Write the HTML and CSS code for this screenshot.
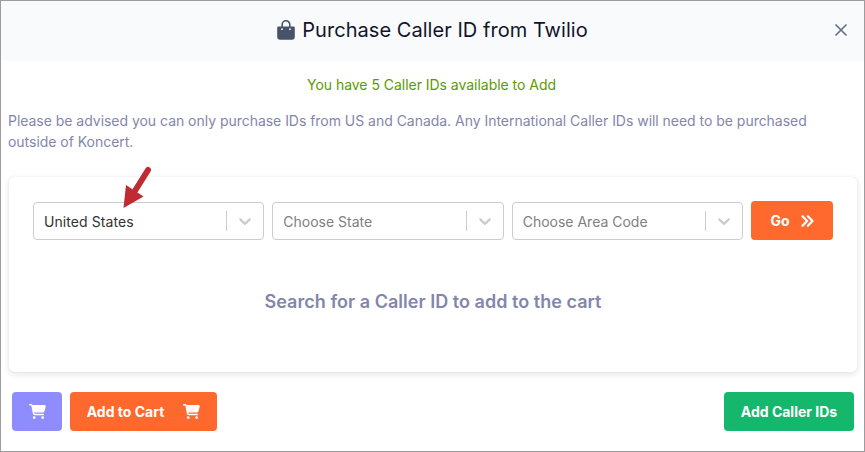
FILE: index.html
```html
<!DOCTYPE html>
<html lang="en">
<head>
<meta charset="utf-8">
<title>Purchase Caller ID</title>
<link rel="stylesheet" href="styles.css">
</head>
<body>
<svg class="defs" aria-hidden="true">
  <symbol id="cart" viewBox="0 0 576 512"><path d="M0 24C0 10.700 10.700 0 24 0H69.500c22 0 41.500 12.800 50.600 32h411c26.300 0 45.500 25 38.600 50.400l-41 152.300c-8.500 31.400-37 53.300-69.500 53.300H170.700l5.400 28.500c2.200 11.300 12.100 19.500 23.600 19.500H488c13.300 0 24 10.700 24 24s-10.700 24-24 24H199.700c-34.600 0-64.300-24.600-70.700-58.500L77.400 54.500c-.7-3.800-4-6.500-7.900-6.500H24C10.700 48 0 37.300 0 24zM128 464a48 48 0 1 1 96 0 48 48 0 1 1-96 0zm336-48a48 48 0 1 1 0 96 48 48 0 1 1 0-96z"/></symbol>
  <symbol id="chevron" viewBox="0 0 20 20"><path d="M4.516 7.548c0.436-0.446 1.043-0.481 1.576 0l3.908 3.747 3.908-3.747c0.533-0.481 1.141-0.446 1.574 0 0.436 0.445 0.408 1.197 0 1.615-0.406 0.418-4.695 4.502-4.695 4.502-0.217 0.223-0.502 0.335-0.787 0.335s-0.570-0.112-0.789-0.335c0 0-4.287-4.084-4.695-4.502s-0.436-1.170 0-1.615z"/></symbol>
</svg>
<div class="modal">
  <header class="modal-header">
    <svg class="bag" viewBox="0 0 18 20"><path class="bag-body" d="M1.500 6.500h15q1.300 0 1.300 1.300v9q0 2.900-2.900 2.900H3.100q-2.900 0-2.900-2.900v-9q0-1.300 1.300-1.300z"/><path class="bag-handle" d="M5.200 7V4.600a3.800 3.800 0 0 1 7.600 0V7"/><circle class="bag-dot" cx="5" cy="9.200" r=".9"/><circle class="bag-dot" cx="13" cy="9.200" r=".9"/></svg>
    <h1 class="title">Purchase Caller ID from Twilio</h1>
    <button class="close" aria-label="Close"><svg viewBox="0 0 12 12"><path d="M1 1l10 10M11 1L1 11"/></svg></button>
  </header>
  <main class="modal-body">
    <p class="available">You have 5 Caller IDs available to Add</p>
    <p class="notice">Please be advised you can only purchase IDs from US and Canada. Any International Caller IDs will need to be purchased outside of Koncert.</p>
    <section class="card">
      <div class="filters">
        <div class="select filled"><span class="value">United States</span><span class="divider"></span><svg class="chevron"><use href="#chevron"/></svg></div>
        <div class="select"><span class="value">Choose State</span><span class="divider"></span><svg class="chevron"><use href="#chevron"/></svg></div>
        <div class="select"><span class="value">Choose Area Code</span><span class="divider"></span><svg class="chevron"><use href="#chevron"/></svg></div>
        <button class="btn orange go">Go<svg class="double" viewBox="0 0 13 12"><path d="M1.500 1.200L6.100 6l-4.600 4.800M6.900 1.200L11.500 6l-4.600 4.800"/></svg></button>
      </div>
      <h2 class="empty">Search for a Caller ID to add to the cart</h2>
    </section>
  </main>
  <footer class="modal-footer">
    <button class="btn violet" aria-label="Cart"><svg class="cart"><use href="#cart"/></svg></button>
    <button class="btn orange add">Add to Cart<svg class="cart"><use href="#cart"/></svg></button>
    <button class="btn green">Add Caller IDs</button>
  </footer>
  <svg class="pointer" viewBox="0 0 30 44"><path d="M26 5L13.500 25"/><polygon points="1.500,43 4,20 21.500,31.500"/></svg>
</div>
</body>
</html>
```
FILE: styles.css
```css
* { box-sizing: border-box; }
body { margin: 0; font-family: Inter, sans-serif; font-size: 14px; background: #fff; }
.defs { position: absolute; width: 0; height: 0; }
h1, h2, p { margin: 0; }
button { font: inherit; border: 0; padding: 0; }
.modal { position: relative; width: 865px; height: 452px; border: 1px solid #9c9c9f; overflow: hidden; display: flex; flex-direction: column; }
.modal-header { position: relative; height: 60px; flex: none; display: flex; align-items: center; justify-content: center; gap: 7px; padding-bottom: 2px; background: #f9fafc; }
.title { font-size: 20px; line-height: 30px; font-weight: 400; letter-spacing: .04px; color: #12152a; }
.bag { width: 18px; height: 20px; }
.bag-body { fill: #475369; }
.bag-handle { fill: none; stroke: #475369; stroke-width: 1.6; }
.bag-dot { fill: #f9fafc; }
.close { position: absolute; right: 17px; top: 23px; width: 12px; height: 12px; background: none; }
.close svg { display: block; width: 12px; height: 12px; fill: none; stroke: #667085; stroke-width: 1.7; stroke-linecap: round; }
.modal-body { padding: 13px 7px 0 7px; }
.available { position: relative; left: -1px; text-align: center; line-height: 21px; letter-spacing: -.03px; color: #5c9a06; }
.notice { margin-top: 15px; line-height: 21px; letter-spacing: -.03px; color: #8386ab; }
.card { margin: 25px 0 0 1px; height: 195px; border-radius: 5px; padding: 24px 24px 0; background: #fff; box-shadow: 0 0 1px rgba(20, 25, 45, .15), 0 2px 6px rgba(20, 25, 45, .12); }
.filters { display: flex; gap: 8px; align-items: flex-end; }
.select { flex: 1; height: 38px; border: 1px solid #ccc; border-radius: 4px; display: flex; align-items: center; color: #808080; }
.filled { color: #333; }
.filled .value { letter-spacing: .08px; }
.value { flex: 1; padding-left: 10px; line-height: 21px; padding-top: 1px; }
.divider { width: 1px; height: 20px; background: #ccc; }
.chevron { width: 20px; height: 20px; margin: 0 8px; fill: #ccc; }
.btn { height: 39px; border-radius: 4px; color: #fff; font-weight: 650; display: flex; align-items: center; justify-content: center; }
.orange { background: #ff692e; }
.go { width: 82px; gap: 11px; }
.double { width: 13px; height: 12px; fill: none; stroke: #fff; stroke-width: 2.2; stroke-linecap: round; stroke-linejoin: round; }
.empty { margin-top: 48px; text-align: center; font-size: 18px; line-height: 27px; font-weight: 600; letter-spacing: .03px; color: #8386ab; }
.modal-footer { display: flex; gap: 8px; padding: 20px 10px 0 11px; }
.violet { width: 50px; background: #8f8dfd; }
.add { width: 147px; gap: 19px; }
.green { width: 130px; margin-left: auto; background: #15b76c; }
.cart { width: 17px; height: 15px; fill: #fff; }
.pointer { position: absolute; left: 121px; top: 164px; width: 30px; height: 44px; fill: #bf2b30; }
.pointer path { stroke: #bf2b30; stroke-width: 6; stroke-linecap: round; }
```
